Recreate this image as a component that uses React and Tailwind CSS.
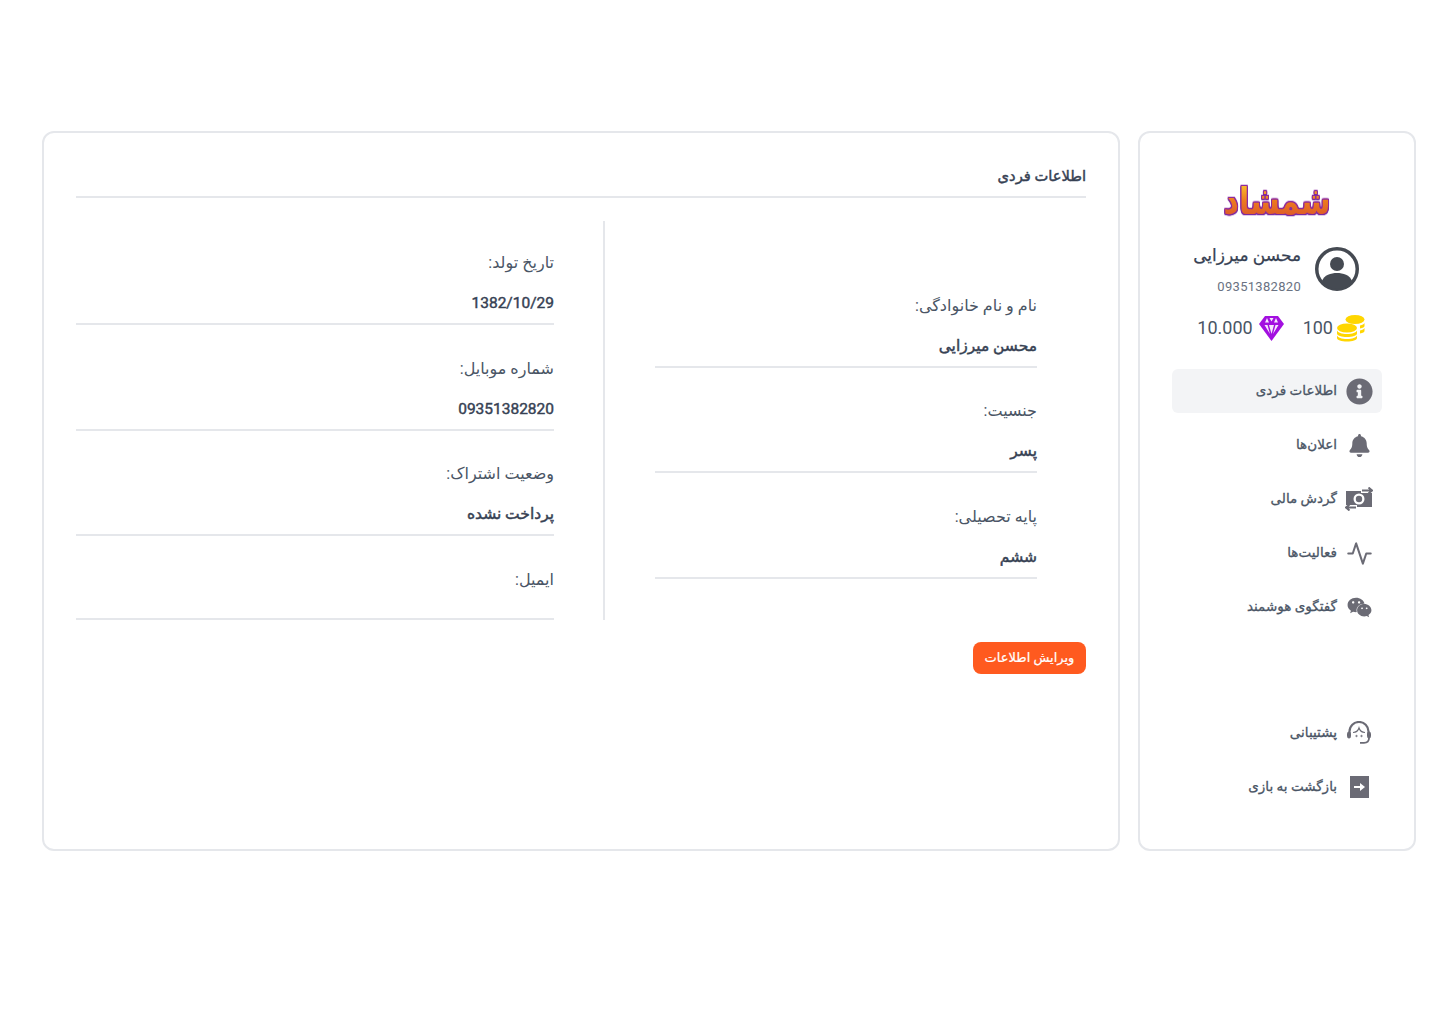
import React from 'react';
import { FaInfoCircle, FaBell, FaWeixin } from 'react-icons/fa';
import { FiActivity } from 'react-icons/fi';

const fa = "font-['Roboto','DejaVu_Sans',sans-serif]";
const iconColor = '#6b6b75';

// small drawn icons, the packages have nothing close for these
const MoneyIcon = () => (
  <svg width="28" height="24" viewBox="0 0 28 24" fill="none">
    <rect x="1" y="4" width="26" height="16" fill={iconColor} />
    <path d="M16 3.500h12M0 20.500h12" stroke="#fff" strokeWidth="5" />
    <circle cx="14" cy="12" r="5.500" fill="#fff" />
    <circle cx="14" cy="12" r="3.200" fill={iconColor} />
    <path d="M17 3.500h9.500M23.500 0.500l3.500 3-3.500 3" stroke={iconColor} strokeWidth="2" />
    <path d="M11 20.500H1.500M4.500 17.500l-3.500 3 3.500 3" stroke={iconColor} strokeWidth="2" />
  </svg>
);

const SupportIcon = () => (
  <svg width="26" height="24" viewBox="0 0 26 24" fill="none" stroke={iconColor} strokeWidth="2.200">
    <path d="M3.500 13v-2.500a9.500 9.500 0 0 1 19 0V13" />
    <path d="M7 11.500c3 0 5-1.500 6-4.500 1 3 3 4.500 6 4.500" strokeWidth="1.200" />
    <rect x="1.500" y="11" width="3" height="6" rx="1.500" fill={iconColor} strokeWidth="1" />
    <rect x="21.500" y="11" width="3" height="6" rx="1.500" fill={iconColor} strokeWidth="1" />
    <path d="M23 17c0 3-2 4.800-5 4.800h-4" strokeWidth="1.800" />
    <circle cx="10.500" cy="15" r="0.800" fill={iconColor} strokeWidth="0.500" />
    <circle cx="15.500" cy="15" r="0.800" fill={iconColor} strokeWidth="0.500" />
  </svg>
);

const ExitIcon = () => (
  <svg width="19" height="22" viewBox="0 0 19 22">
    <rect width="19" height="22" fill={iconColor} />
    <path d="M4 10h6V7l5 4-5 4v-3H4z" fill="#fff" />
  </svg>
);

const Avatar = () => (
  <svg width="44" height="44" viewBox="0 0 44 44">
    <circle cx="22" cy="22" r="20.250" fill="#fff" stroke="#454a52" strokeWidth="3.500" />
    <circle cx="22" cy="17" r="7" fill="#454a52" />
    <path d="M7 34c2-6 9-8 15-8s13 2 15 8c-3.500 5-9 8-15 8s-11.500-3-15-8z" fill="#454a52" />
  </svg>
);

const Diamond = () => (
  <svg width="25" height="26" viewBox="0 0 25 26">
    <path d="M6 1h13l6 8-12.500 17L0 9z" fill="#a30fe0" />
    <path d="M8 3L6 7.500h4zM17 3l2 4.500h-4zM10.500 3l2 3.500 2-3.500zM5.500 10l5.500 9-2.500-9zM19.500 10L14 19l2.500-9zM10 10h5l-2.500 9z" fill="#fff" fillOpacity="0.9" />
  </svg>
);

const Coins = () => (
  <svg width="28" height="27" viewBox="0 0 28 27" fill="#ffd600">
    <ellipse cx="18" cy="4.500" rx="9.500" ry="4.500" />
    <path d="M23 10.500c2.500-.5 4-1.500 4.500-2.500v3c0 1-1.500 2-4.500 2.500zM23 15.500c2.500-.5 4-1.500 4.500-2.500v3c0 1-1.500 2-4.500 2.500z" />
    <ellipse cx="10" cy="13" rx="10" ry="4.500" />
    <path d="M0 15.500c1 2 4.500 3.500 10 3.500s9-1.500 10-3.500v3c0 2-4.500 3.500-10 3.500S0 20.500 0 18.500z" />
    <path d="M0 20.500c1 2 4.500 3.500 10 3.500s9-1.500 10-3.500v2.500c0 2-4.500 3.500-10 3.500S0 25 0 23z" />
  </svg>
);

const navTop = [
  { label: 'اطلاعات فردی', icon: <FaInfoCircle size={27} color={iconColor} />, active: true },
  { label: 'اعلان‌ها', icon: <FaBell size={23} color={iconColor} /> },
  { label: 'گردش مالی', icon: <MoneyIcon /> },
  { label: 'فعالیت‌ها', icon: <FiActivity size={27} color={iconColor} strokeWidth={1.800} /> },
  { label: 'گفتگوی هوشمند', icon: <FaWeixin size={25} color={iconColor} /> },
];

const navBottom = [
  { label: 'پشتیبانی', icon: <SupportIcon /> },
  { label: 'بازگشت به بازی', icon: <ExitIcon /> },
];

function NavItem({ item }) {
  return (
    <a href="#" className={`flex items-center gap-2 h-11 rounded-md pr-[9px] ${item.active ? 'bg-gray-100' : ''}`}>
      <span className="w-7 h-7 flex items-center justify-center shrink-0">{item.icon}</span>
      <span className={`${fa} text-[13.5px] -mt-0.5 text-gray-600 [-webkit-text-stroke:0.3px_currentColor]`}>{item.label}</span>
    </a>
  );
}

function Field({ label, value }) {
  return (
    <div className={`${fa} pt-[31.5px]`}>
      <div className="text-base leading-6 text-gray-600 mb-4">{label}</div>
      {value
        ? <div className="text-[15.5px] leading-6 text-gray-700 [-webkit-text-stroke:0.45px_currentColor]">{value}</div>
        : <div className="h-[2.5px]" />}
      <div className="mt-2 border-b-2 border-gray-200" />
    </div>
  );
}

function Sidebar() {
  return (
    <aside className="w-[278px] shrink-0 h-[720px] border-2 border-gray-200 rounded-xl px-8 pt-[30px] flex flex-col">
      <div className="h-[76px] flex items-center justify-center">
        <span className={`${fa} text-[30px] leading-none font-bold scale-y-125 bg-linear-to-b from-[#f9c62c] via-[#ec7a1d] to-[#d8502a] bg-clip-text text-transparent [filter:drop-shadow(1px_0_0_#8e2a9c)_drop-shadow(-1px_0_0_#8e2a9c)_drop-shadow(0_1px_0_#7b2a9e)_drop-shadow(0_-1px_0_#8e2a9c)]`}>شمشاد</span>
      </div>
      <div className="flex items-center gap-[14px] pr-[23px] mt-[-1px] h-[62px]">
        <Avatar />
        <div className="pt-[2px]">
          <div className={`${fa} text-[17px] leading-6 -mt-px text-gray-700 [-webkit-text-stroke:0.25px_currentColor]`}>محسن میرزایی</div>
          <div dir="ltr" className="text-right font-['Roboto',sans-serif] text-[13px] tracking-[0.3px] leading-5 mt-[10px] text-gray-500">09351382820</div>
        </div>
      </div>
      <div className="flex items-center gap-[19px] pr-[17px] mt-[10px] h-[36px] font-['Roboto',sans-serif] text-lg text-gray-600">
        <div className="flex items-center gap-[4px]"><Coins /><span>100</span></div>
        <div className="flex items-center gap-[6px]"><Diamond /><span>10.000</span></div>
      </div>
      <nav className="mt-[23px] flex flex-col gap-[10px]">
        {navTop.map((item) => <NavItem key={item.label} item={item} />)}
      </nav>
      <nav className="mt-[82px] flex flex-col gap-[10px]">
        {navBottom.map((item) => <NavItem key={item.label} item={item} />)}
      </nav>
    </aside>
  );
}

export default function App() {
  return (
    <div dir="rtl" className="min-h-[1024px] bg-white pt-[131px] pr-6 pl-[42px] flex gap-[18px]">
      <Sidebar />
      <main className="flex-1 h-[720px] border-2 border-gray-200 rounded-xl p-8">
        <h2 className={`${fa} text-[14.7px] leading-[22px] text-gray-700 pb-[9px] border-b-2 border-gray-200 [-webkit-text-stroke:0.45px_currentColor]`}>اطلاعات فردی</h2>
        <div className="flex mt-[23px] h-[399px]">
          <section className="w-[481px] shrink-0 pr-[49px] pl-[50px] flex flex-col justify-center">
            <Field label="نام و نام خانوادگی:" value="محسن میرزایی" />
            <Field label="جنسیت:" value="پسر" />
            <Field label="پایه تحصیلی:" value="ششم" />
          </section>
          <section className="flex-1 border-r-2 border-gray-200 pr-[49px]">
            <div className="-mt-[1.5px]">
              <Field label="تاریخ تولد:" value="1382/10/29" />
              <Field label="شماره موبایل:" value="09351382820" />
              <Field label="وضعیت اشتراک:" value="پرداخت نشده" />
              <Field label="ایمیل:" />
            </div>
          </section>
        </div>
        <button className={`${fa} mt-[22px] h-8 w-[113px] rounded-lg bg-[#ff5a1f] text-white text-[13px] [-webkit-text-stroke:0.2px_currentColor]`}>ویرایش اطلاعات</button>
      </main>
    </div>
  );
}
